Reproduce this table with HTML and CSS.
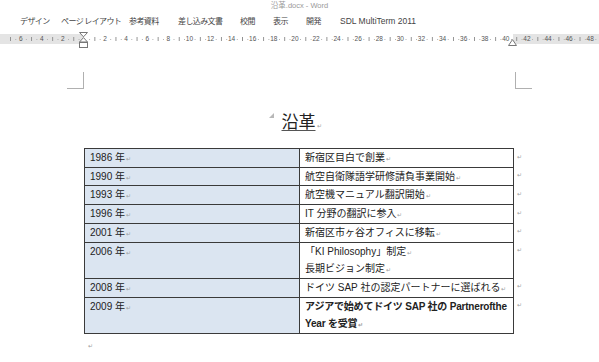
FILE: index.html
```html
<!DOCTYPE html>
<html lang="ja">
<head>
<meta charset="utf-8">
<title>沿革.docx - Word</title>
<link rel="stylesheet" href="styles.css">
</head>
<body>
<div class="titlebar">沿革.docx - Word</div>
<nav class="tabs">
  <span>デザイン</span>
  <span>ページ レイアウト</span>
  <span>参考資料</span>
  <span>差し込み文書</span>
  <span>校閲</span>
  <span>表示</span>
  <span>開発</span>
  <span class="latin">SDL MultiTerm 2011</span>
</nav>
<div class="ruler">
  <div class="band">
    <div class="scale">
      <span>6</span><span>4</span><span>2</span><span></span>
      <span>2</span><span>4</span><span>6</span><span>8</span><span>10</span>
      <span>12</span><span>14</span><span>16</span><span>18</span><span>20</span>
      <span>22</span><span>24</span><span>26</span><span>28</span><span>30</span>
      <span>32</span><span>34</span><span>36</span><span>38</span><span>40</span>
      <span>42</span><span>44</span><span>46</span><span>48</span>
    </div>
  </div>
  <svg class="mk mk-left" width="9" height="16" viewBox="0 0 9 16">
    <path d="M0.5 0.5 H8.5 L4.5 4.8 Z" fill="#fff" stroke="#777"/>
    <path d="M4.5 5.6 L8.5 10 H0.5 Z" fill="#fff" stroke="#777"/>
    <rect x="0.5" y="10.5" width="8" height="5" fill="#fff" stroke="#777"/>
  </svg>
  <svg class="mk mk-right" width="9" height="7" viewBox="0 0 9 7">
    <path d="M4.5 0.6 L8.5 6.5 H0.5 Z" fill="#fff" stroke="#777"/>
  </svg>
</div>
<main class="doc">
  <div class="corners">
    <span class="corner corner-l"></span>
    <span class="corner corner-r"></span>
  </div>
  <h1 class="title"><span class="title-text"><span class="anchor"></span>沿革<span class="pm-title">↵</span></span></h1>
  <table class="history">
    <tr><td class="yr">1986 年<span class="pm">↵</span></td><td class="ev">新宿区目白で創業<span class="pm">↵</span></td><td class="eor">↵</td></tr>
    <tr><td class="yr">1990 年<span class="pm">↵</span></td><td class="ev">航空自衛隊語学研修請負事業開始<span class="pm">↵</span></td><td class="eor">↵</td></tr>
    <tr><td class="yr">1993 年<span class="pm">↵</span></td><td class="ev">航空機マニュアル翻訳開始<span class="pm">↵</span></td><td class="eor">↵</td></tr>
    <tr><td class="yr">1996 年<span class="pm">↵</span></td><td class="ev">IT 分野の翻訳に参入<span class="pm">↵</span></td><td class="eor">↵</td></tr>
    <tr><td class="yr">2001 年<span class="pm">↵</span></td><td class="ev">新宿区市ヶ谷オフィスに移転<span class="pm">↵</span></td><td class="eor">↵</td></tr>
    <tr><td class="yr">2006 年<span class="pm">↵</span></td><td class="ev">「KI Philosophy」制定<span class="pm">↵</span><br>長期ビジョン制定<span class="pm">↵</span></td><td class="eor">↵</td></tr>
    <tr><td class="yr">2008 年<span class="pm">↵</span></td><td class="ev">ドイツ SAP 社の認定パートナーに選ばれる<span class="pm">↵</span></td><td class="eor">↵</td></tr>
    <tr><td class="yr">2009 年<span class="pm">↵</span></td><td class="ev bold"><span class="nowrap">アジアで始めてドイツ SAP 社の Partnerofthe</span><br>Year を受賞<span class="pm">↵</span></td><td class="eor">↵</td></tr>
  </table>
  <p class="after"><span class="pm">↵</span></p>
</main>
</body>
</html>
```

FILE: styles.css
```css
html, body {
  margin: 0;
  padding: 0;
  background: #fff;
}
body {
  width: 599px;
  height: 362px;
  overflow: hidden;
  font-family: "Liberation Sans", "Noto Sans CJK JP", sans-serif;
  color: #222;
}

.titlebar {
  height: 12px;
  line-height: 11px;
  font-size: 7.5px;
  color: #9a9a9a;
  text-align: center;
}

.tabs {
  height: 17px;
  display: grid;
  grid-template-columns: 41px 68px 49px 62px 33px 33px 34px auto;
  padding-left: 20px;
  align-items: center;
  font-family: "Noto Sans CJK JP", sans-serif;
  font-size: 8px;
  letter-spacing: -0.6px;
  color: #444;
  white-space: nowrap;
}
.tabs .latin {
  font-family: "Liberation Sans", sans-serif;
  font-size: 8.5px;
  letter-spacing: 0;
}

.ruler {
  position: relative;
  height: 19px;
  padding-top: 5px;
  box-sizing: border-box;
}
.band {
  height: 10px;
  background:
    linear-gradient(to right, #e4e4e4 84px, #fff 84px, #fff 513px, #e4e4e4 513px);
}
.scale {
  display: flex;
  height: 10px;
  margin-left: 10.15px;
  background-image:
    linear-gradient(to right, #909090 1px, transparent 1px),
    linear-gradient(to right, #b0b0b0 1px, transparent 1px);
  background-size: 21.1px 4px, 10.55px 1px;
  background-position: 0 3px, 5.3px 5px;
  background-repeat: repeat-x;
}
.scale span {
  flex: none;
  width: 21.1px;
  text-align: center;
  font-size: 6.5px;
  line-height: 10px;
  color: #555;
}
.mk {
  position: absolute;
  display: block;
}
.mk-left {
  left: 79px;
  top: 3px;
}
.mk-right {
  left: 508px;
  top: 10px;
}

.doc {
  padding-top: 24px;
}
.corners {
  display: flex;
  justify-content: space-between;
  margin-left: 67px;
  width: 465px;
  height: 17px;
}
.corner {
  width: 16px;
  height: 16px;
  border-bottom: 1px solid #b0b0b0;
}
.corner-l {
  border-right: 1px solid #b0b0b0;
}
.corner-r {
  border-left: 1px solid #b0b0b0;
}

.title {
  margin: 21px 0 0 84px;
  width: 429px;
  height: 22px;
  text-align: center;
  font-family: "Noto Sans CJK JP", sans-serif;
  font-weight: normal;
  font-size: 17px;
  line-height: 22px;
  color: #222;
}
.title-text {
  position: relative;
  text-decoration: underline;
  text-decoration-thickness: 1px;
  text-underline-offset: 2px;
  text-decoration-color: #555;
}
.anchor {
  position: absolute;
  right: calc(100% + 8px);
  top: 5px;
  width: 0;
  height: 0;
  border-left: 5px solid transparent;
  border-bottom: 5px solid #b8b8b8;
}
.pm-title {
  position: absolute;
  left: 100%;
  bottom: 4px;
  margin-left: 1px;
  font-size: 6px;
  line-height: 6px;
  color: #a0a0a0;
}
.pm {
  font-size: 6px;
  line-height: 0;
  color: #a0a0a0;
  margin-left: 1px;
}

.history {
  margin: 16px 0 0 84px;
  border-collapse: collapse;
  font-size: 10px;
}
.history td {
  line-height: 17.7px;
  padding: 0 4px 0 5px;
  vertical-align: top;
  white-space: nowrap;
}
.history td.yr,
.history td.ev {
  border: 1px solid #3a3a3a;
}
.history td.yr {
  width: 205px;
  background: #dbe5f1;
}
.history td.ev {
  width: 204px;
}
.history td.eor {
  padding: 0 0 0 3px;
  font-size: 6px;
  line-height: 17.7px;
  color: #a0a0a0;
  border: none;
}
.history td.bold {
  font-weight: bold;
  letter-spacing: -0.2px;
}
.nowrap {
  white-space: nowrap;
}

.after {
  margin: 4px 0 0 87px;
  line-height: 10px;
}
```
